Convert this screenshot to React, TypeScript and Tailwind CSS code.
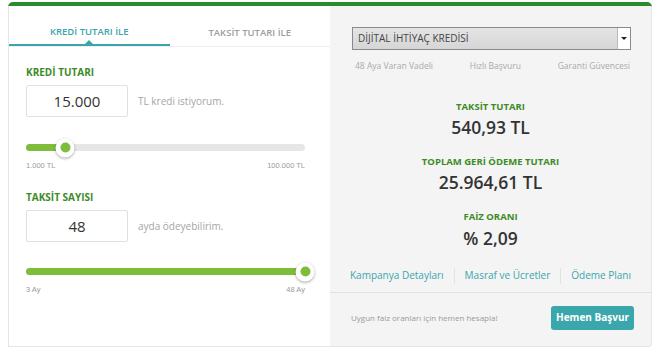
// Kredi hesaplama aracı: sol tarafta tutar/taksit girişi, sağda sonuç özeti.

const font = "font-['Open_Sans',_'Noto_Sans',_sans-serif]";

function Slider({ pct, min, max }: { pct: number; min: string; max: string }) {
  return (
    <div className="pr-[25px]">
      <div className="relative h-[7px] rounded-full bg-[#e6e6e6]">
        <div className="h-full rounded-full bg-[#7dbd3a]" style={{ width: `${pct}%` }} />
        <div
          className="absolute top-1/2 flex h-[19px] w-[19px] -translate-x-1/2 -translate-y-1/2 items-center justify-center rounded-full bg-white shadow-[0_1px_3px_rgba(0,0,0,0.35)]"
          style={{ left: `${pct}%` }}
        >
          <div className="h-[10px] w-[10px] rounded-full bg-[#7dbd3a]" />
        </div>
      </div>
      <div className="mt-[9px] flex justify-between font-['Liberation_Sans',_sans-serif] text-[7.5px] text-[#9a9a9a]">
        <span>{min}</span>
        <span>{max}</span>
      </div>
    </div>
  );
}

function Field({ label, value, suffix }: { label: string; value: string; suffix: string }) {
  return (
    <div>
      <div className="text-[10px] font-bold text-[#3d8b27]">{label}</div>
      <div className="mt-[5px] flex items-center gap-[10px]">
        <div className="flex h-[32px] w-[102px] items-center justify-center rounded-[2px] border border-[#e0e0e0] text-[15px] text-[#333]">
          {value}
        </div>
        <span className="text-[10px] text-[#a5a5a5]">{suffix}</span>
      </div>
    </div>
  );
}

function Result({ label, value }: { label: string; value: string }) {
  return (
    <div className="flex flex-col items-center">
      <div className="text-[9.5px] font-bold text-[#3d8b27]">{label}</div>
      <div className="mt-[1px] text-[17.5px] font-semibold leading-[24px] text-[#333]">{value}</div>
    </div>
  );
}

export default function App() {
  return (
    <div className={`h-[349px] w-[660px] bg-white px-[8px] pt-[2px] ${font}`}>
      <div className="flex h-[345px] overflow-hidden rounded-t-[5px] border-t-[4px] border-[#2a8a2e]">
        {/* sol panel */}
        <div className="flex w-[322px] flex-col border-b border-l border-[#e6e6e6] bg-white">
          <div className="flex h-[41px] border-b border-[#eeeeee]">
            <div className="relative flex w-1/2 items-end justify-center border-b-2 border-[#3ba5ad] pb-[5px] text-[9.5px] font-semibold text-[#3ba5ad]">
              KREDİ TUTARI İLE
              <div className="absolute bottom-0 left-1/2 h-0 w-0 -translate-x-1/2 border-x-[4px] border-b-[4px] border-x-transparent border-b-[#3ba5ad]" />
            </div>
            <div className="flex w-1/2 items-end justify-center pb-[6px] text-[9.5px] font-semibold text-[#9d9d9d]">
              TAKSİT TUTARI İLE
            </div>
          </div>
          <div className="flex flex-col pl-[17px] pt-[18px]">
            <Field label="KREDİ TUTARI" value="15.000" suffix="TL kredi istiyorum." />
            <div className="mt-[27px]">
              <Slider pct={14} min="1.000 TL" max="100.000 TL" />
            </div>
            <div className="mt-[19px]">
              <Field label="TAKSİT SAYISI" value="48" suffix="ayda ödeyebilirim." />
            </div>
            <div className="mt-[26px]">
              <Slider pct={100} min="3 Ay" max="48 Ay" />
            </div>
          </div>
        </div>

        {/* sağ panel */}
        <div className="flex flex-1 flex-col rounded-br-[4px] border-b border-r border-[#e6e6e6] bg-[#f4f4f4]">
          <div className="px-[22px] pr-[20px] pt-[21px]">
            <div className="flex h-[23px] items-center border border-[#8a8a8a] bg-gradient-to-b from-[#e4e4e4] to-[#d6d6d6]">
              <span className="flex-1 pl-[5px] text-[10px] text-[#444]">DİJİTAL İHTİYAÇ KREDİSİ</span>
              <div className="flex h-full w-[13px] items-center justify-center border-l border-[#bbb] bg-white">
                <div className="h-0 w-0 border-x-[3px] border-t-[3px] border-x-transparent border-t-[#222]" />
              </div>
            </div>
            <div className="mt-[10px] flex justify-between pl-[3px] pr-[1px] text-[8.5px] text-[#aaaaaa]">
              <span>48 Aya Varan Vadeli</span>
              <span>Hızlı Başvuru</span>
              <span>Garanti Güvencesi</span>
            </div>
          </div>

          <div className="mt-[27px] flex flex-col gap-[16px]">
            <Result label="TAKSİT TUTARI" value="540,93 TL" />
            <Result label="TOPLAM GERİ ÖDEME TUTARI" value="25.964,61 TL" />
            <Result label="FAİZ ORANI" value="% 2,09" />
          </div>

          <div className="mt-[18px] flex items-center justify-between border-b border-[#e2e2e2] px-[20px] pb-[8px] text-[10px] text-[#3ba5ad]">
            <span>Kampanya Detayları</span>
            <span className="h-[16px] w-px bg-[#e2e2e2]" />
            <span>Masraf ve Ücretler</span>
            <span className="h-[16px] w-px bg-[#e2e2e2]" />
            <span>Ödeme Planı</span>
          </div>

          <div className="flex flex-1 items-center justify-between pb-[3px] pl-[21px] pr-[17px]">
            <span className="text-[8px] text-[#9a9a9a]">Uygun faiz oranları için hemen hesapla!</span>
            <div className="flex h-[24px] items-center rounded-[3px] bg-[#3aa7ac] px-[5px] text-[10px] font-bold text-white">
              Hemen Başvur
            </div>
          </div>
        </div>
      </div>
    </div>
  );
}
